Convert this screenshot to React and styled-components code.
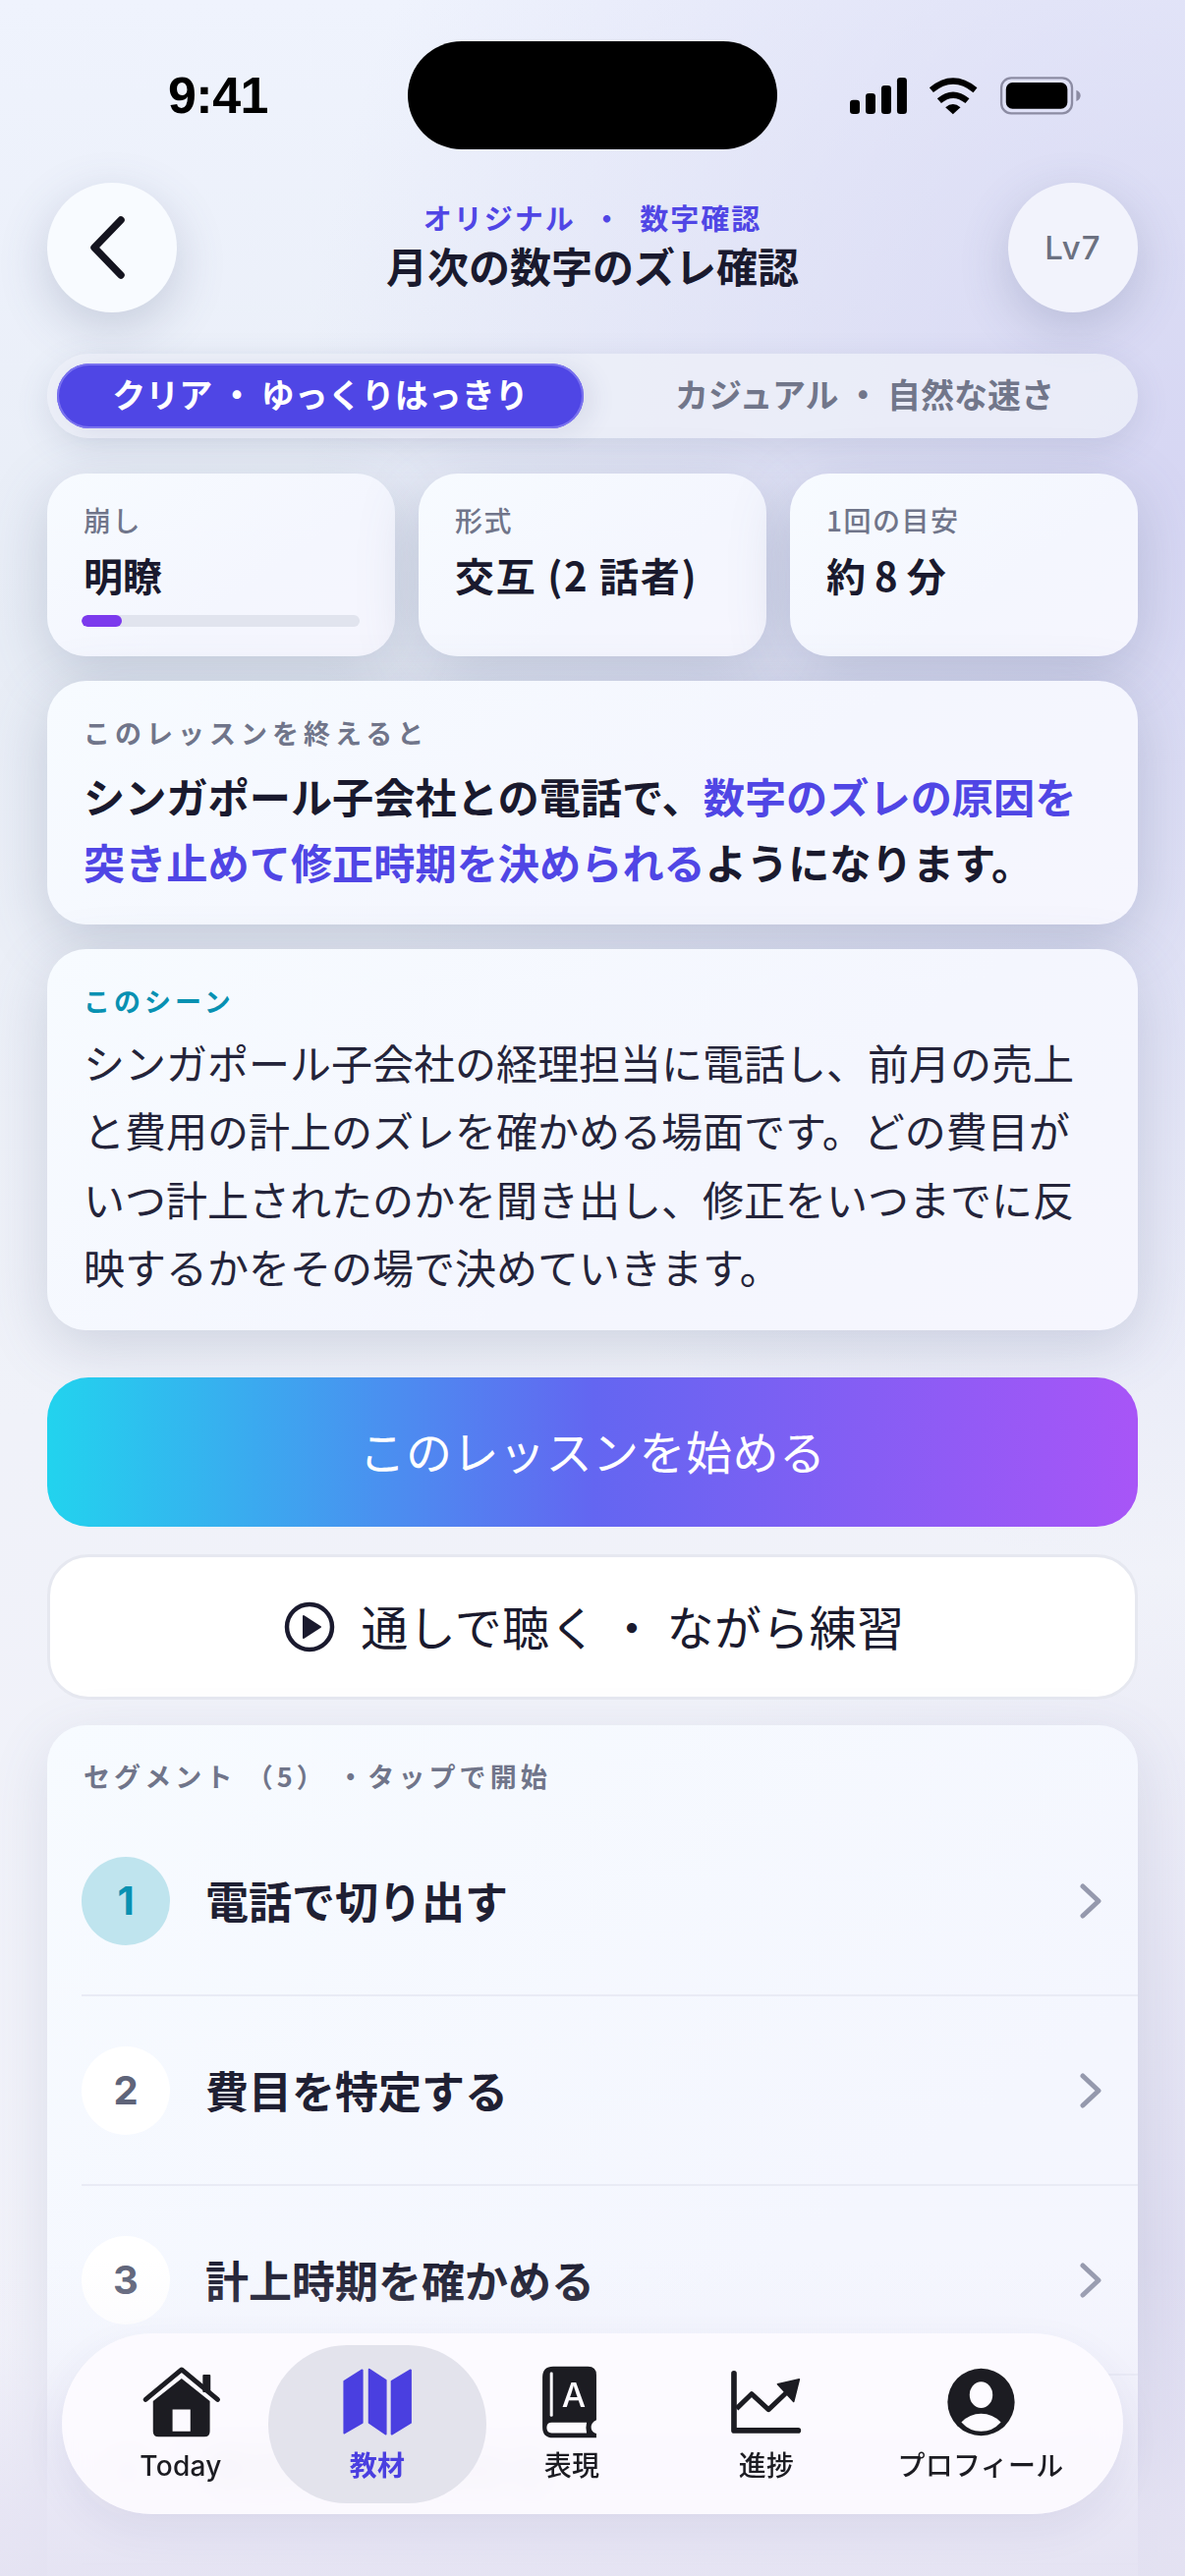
import React from 'react'
import styled, { createGlobalStyle } from 'styled-components'

const JP = `"Noto Sans CJK JP", "Noto Sans", sans-serif`
const LATIN = `Inter, "Noto Sans CJK JP", sans-serif`

const Global = createGlobalStyle`
  html, body { margin: 0; padding: 0; }
  body { font-family: ${JP}; color: #1a1a2e; }
  * { box-sizing: border-box; }
`

const Screen = styled.div`
  position: relative;
  width: 1206px;
  height: 2622px;
  overflow: hidden;
  padding: 0 48px;
  display: flex;
  flex-direction: column;
  background:
    radial-gradient(900px 1100px at 100% 500px, #d6d6f3 0%, rgba(214,214,243,0) 100%),
    radial-gradient(900px 900px at 100% 2500px, #dad8ef 0%, rgba(218,216,239,0) 100%),
    linear-gradient(180deg, #eff3fd 0%, #e8edf6 25%, #f0f2f9 55%, #f2f2fa 100%);
`

const StatusBar = styled.div`
  flex: none;
  height: 152px;
  margin: 0 -48px;
  padding-top: 42px;
  display: grid;
  grid-template-columns: 415px 376px 1fr;
  align-items: start;
`
const Clock = styled.div`
  padding-left: 29px;
  text-align: center;
  font-family: "Liberation Sans", sans-serif;
  font-weight: 700;
  font-size: 52px;
  line-height: 110px;
  letter-spacing: -0.5px;
  color: #000;
`
const Island = styled.div`
  height: 110px;
  border-radius: 55px;
  background: #000;
`
const StatusIcons = styled.svg`
  display: block;
  margin: 33px 0 0 69px;
`

const Header = styled.header`
  flex: none;
  height: 132px;
  margin-top: 34px;
  display: flex;
  align-items: center;
  justify-content: space-between;
`
const RoundButton = styled.div`
  width: 132px;
  height: 132px;
  border-radius: 50%;
  background: ${p => p.$tint || '#f8fbff'};
  box-shadow: 0 16px 50px rgba(80, 92, 130, 0.24);
  display: flex;
  align-items: center;
  justify-content: center;
  font-family: ${LATIN};
  font-weight: 500;
  font-size: 33px;
  letter-spacing: 1px;
  color: #6b7080;
`
const BackGlyph = styled.svg`
  display: block;
  margin-right: 9px;
`
const HeaderText = styled.div`
  text-align: center;
  margin-top: -6px;
`
const Kicker = styled.div`
  font-size: 29px;
  line-height: 38px;
  font-weight: 600;
  color: #5046e5;
  letter-spacing: 2px;
  white-space: pre;
`
const Title = styled.h1`
  margin: 4px 0 0;
  font-size: 42px;
  line-height: 52px;
  font-weight: 700;
  color: #1a1a2e;
`

const Segmented = styled.div`
  flex: none;
  margin-top: 42px;
  height: 86px;
  border-radius: 43px;
  padding: 10px;
  display: grid;
  grid-template-columns: 536px 1fr;
  background: rgba(236, 238, 248, 0.85);
  box-shadow: 0 10px 34px rgba(80, 92, 130, 0.14);
`
const SegmentOption = styled.div`
  border-radius: 33px;
  padding: 0 0 6px ${p => (p.$active ? 0 : 18)}px;
  display: flex;
  align-items: center;
  justify-content: center;
  font-size: 34px;
  font-weight: ${p => (p.$active ? 700 : 600)};
  white-space: pre;
  color: ${p => (p.$active ? '#fff' : '#71768a')};
  background: ${p => (p.$active ? '#4f46e5' : 'transparent')};
  box-shadow: ${p => (p.$active ? '0 0 0 2px #7a72ef inset, 10px 4px 24px rgba(70,80,125,.1)' : 'none')};
`

const StatRow = styled.div`
  flex: none;
  margin-top: 36px;
  display: grid;
  grid-template-columns: repeat(3, 354px);
  gap: 24px;
`
const Card = styled.section`
  flex: none;
  border-radius: 40px;
  background: linear-gradient(145deg, #f7fbff 0%, #f4f6fe 60%, #f6f6fe 100%);
  box-shadow: 0 16px 60px rgba(85, 100, 135, ${p => p.$shade || 0.14});
`
const StatCard = styled(Card)`
  height: 186px;
  padding: 27px 34px 0 37px;
`
const StatLabel = styled.div`
  font-size: 28px;
  line-height: 40px;
  font-weight: 500;
  letter-spacing: 1.5px;
  color: #70758a;
`
const StatValue = styled.div`
  margin-top: 10px;
  font-size: 40px;
  line-height: 52px;
  font-weight: 700;
  letter-spacing: ${p => p.$spacing || 0};
  color: #1a1a2e;
  white-space: pre;
`
const Bar = styled.div`
  margin: 15px 2px 0 -2px;
  height: 12px;
  border-radius: 6px;
  background: #e1e4ee;
  overflow: hidden;
`
const BarFill = styled.div`
  width: 41px;
  height: 100%;
  border-radius: 6px;
  background: #7c3aed;
`

const OutcomeCard = styled(Card)`
  height: 248px;
  margin-top: 25px;
  padding: 34px 37px 0;
`
const Eyebrow = styled.div`
  font-size: 27px;
  line-height: 38px;
  font-weight: 600;
  letter-spacing: ${p => p.$spacing || '5px'};
  color: ${p => p.$color || '#70758a'};
  white-space: pre;
`
const OutcomeText = styled.p`
  margin: 11px 0 0;
  font-size: 42.2px;
  line-height: 67px;
  font-weight: 700;
  color: #1a1a2e;
  white-space: nowrap;
`
const Accent = styled.span`
  color: #5046e5;
`
const SceneCard = styled(Card)`
  height: 388px;
  margin-top: 25px;
  padding: 34px 37px 0;
`
const SceneText = styled.p`
  margin: 8px 0 0;
  font-size: 42px;
  line-height: 69.3px;
  font-weight: 400;
  color: #24243a;
  white-space: nowrap;
`

const PrimaryButton = styled.div`
  flex: none;
  margin-top: 48px;
  height: 152px;
  padding-bottom: 6px;
  border-radius: 42px;
  display: flex;
  align-items: center;
  justify-content: center;
  font-size: 47px;
  font-weight: 400;
  letter-spacing: 0.5px;
  color: #fff;
  background: linear-gradient(90deg, #22d3ee 0%, #6366f1 50%, #a855f7 100%);
`
const SecondaryButton = styled.div`
  flex: none;
  margin-top: 28px;
  height: 148px;
  padding-left: 4px;
  border-radius: 42px;
  display: flex;
  align-items: center;
  justify-content: center;
  gap: 26px;
  font-size: 48px;
  color: #1a1a2e;
  background: #fff;
  border: 3px solid #e6e8f0;
`
const SecondaryLabel = styled.span`
  padding-bottom: 5px;
  letter-spacing: 0.4px;
  white-space: pre;
`

const ListCard = styled(Card)`
  margin-top: 26px;
  height: 1000px;
  padding: 33px 0 0 37px;
`
const ListHead = styled(Eyebrow)`
  margin-bottom: 12px;
`
const Row = styled.div`
  height: 193px;
  margin-left: -2px;
  padding-right: 36px;
  display: flex;
  align-items: center;
  border-bottom: 2px solid #e9ebf5;
`
const Badge = styled.div`
  flex: none;
  width: 90px;
  height: 90px;
  border-radius: 50%;
  display: flex;
  align-items: center;
  justify-content: center;
  font-family: ${LATIN};
  font-size: 40px;
  font-weight: 700;
  color: ${p => (p.$active ? '#0891b2' : '#5f6479')};
  background: ${p => (p.$active ? '#bfe4ee' : '#fff')};
`
const RowTitle = styled.div`
  flex: 1;
  margin-left: 36px;
  padding-bottom: 2px;
  font-size: 44px;
  font-weight: 600;
  color: #1f2033;
`

const BottomFade = styled.div`
  position: absolute;
  left: 0;
  right: 0;
  bottom: 0;
  height: 322px;
  pointer-events: none;
  background: linear-gradient(180deg, rgba(240,239,249,0) 0%, rgba(236,235,247,.18) 25%, rgba(229,227,243,.85) 80%, rgba(228,226,242,.92) 100%);
`
const TabBar = styled.nav`
  position: absolute;
  left: 63px;
  top: 2375px;
  width: 1080px;
  height: 184px;
  border-radius: 92px;
  padding: 12px 0 11px 32px;
  display: grid;
  grid-template-columns: 178px 222px 174px 222px 214px;
  background: rgba(253, 251, 255, 0.9);
  backdrop-filter: blur(14px);
  box-shadow: 0 16px 40px rgba(70, 70, 125, 0.08);
`
const Tab = styled.div`
  border-radius: 80px;
  display: flex;
  flex-direction: column;
  align-items: center;
  background: ${p => (p.$active ? 'rgba(226,226,235,.95)' : 'transparent')};
`
const TabIcon = styled.svg`
  display: block;
  margin-top: 20px;
  height: 76px;
`
const TabLabel = styled.div`
  margin-top: 7px;
  font-family: ${LATIN};
  font-size: 28px;
  line-height: 40px;
  letter-spacing: 0.3px;
  font-weight: ${p => (p.$active ? 600 : 500)};
  white-space: nowrap;
  color: ${p => (p.$active ? '#4a3fe0' : '#1c1c22')};
`

const Chevron = () => (
  <svg width="24" height="36" viewBox="0 0 24 36" fill="none">
    <path d="M4 3 L20 18 L4 33" stroke="#9599ad" strokeWidth="5" strokeLinecap="round" strokeLinejoin="round" />
  </svg>
)

const HomeIcon = () => (
  <TabIcon viewBox="120 80 250 230" width="83">
    <path d="M135 187 L246 95 L357 187" fill="none" stroke="#1c1c22" strokeWidth="15" strokeLinecap="round" strokeLinejoin="round" />
    <rect x="311" y="110" width="24" height="55" rx="3" fill="#1c1c22" />
    <path
      fillRule="evenodd"
      fill="#1c1c22"
      d="M158 192 L246 122 L333 192 V285 Q333 302 316 302 H175 Q158 302 158 285 Z M218 218 V285 H273 V218 Z"
    />
  </TabIcon>
)

const MapIcon = () => (
  <TabIcon viewBox="710 85 225 220" width="77">
    <g fill="#4a3fe0" stroke="#4a3fe0" strokeWidth="6" strokeLinejoin="round">
      <path d="M723 133 L776 100 V256 L723 287 Z" />
      <path d="M797 98 L846 130 V290 L797 256 Z" />
      <path d="M864 133 L920 100 V256 L864 290 Z" />
    </g>
  </TabIcon>
)

const BookIcon = () => (
  <TabIcon viewBox="1309 80 190 230" width="63">
    <path
      fill="#1c1c22"
      d="M1345 85 H1452 Q1478 85 1478 111 V250 Q1460 258 1462 275 Q1464 288 1478 292 V305 H1345 Q1312 305 1312 272 V118 Q1312 85 1345 85 Z"
    />
    <path fill="#fdfbff" d="M1340 258 H1448 Q1444 275 1448 290 H1340 Q1325 290 1325 274 Q1325 258 1340 258 Z" />
    <rect x="1335" y="103" width="9" height="137" rx="4" fill="#fdfbff" />
    <text x="1408" y="211" textAnchor="middle" fontFamily="Inter, sans-serif" fontSize="104" fontWeight="500" fill="#fdfbff">A</text>
  </TabIcon>
)

const ChartIcon = () => (
  <TabIcon viewBox="290 90 235 210" width="78">
    <path d="M308 107 V282 H505" fill="none" stroke="#1c1c22" strokeWidth="17" strokeLinecap="round" strokeLinejoin="round" />
    <path d="M316 215 L362 170 L414 218 L470 165" fill="none" stroke="#1c1c22" strokeWidth="15" strokeLinejoin="round" />
    <path d="M442 140 L508 125 L491 193 Z" fill="#1c1c22" stroke="#1c1c22" strokeWidth="5" strokeLinejoin="round" />
  </TabIcon>
)

const ProfileIcon = () => (
  <TabIcon viewBox="930 85 230 220" width="77">
    <circle cx="1045" cy="195" r="102" fill="#1c1c22" />
    <ellipse cx="1045" cy="173" rx="35" ry="40" fill="#fdfbff" />
    <path d="M985 256 Q1010 230 1045 230 Q1080 230 1105 256 Q1080 284 1045 284 Q1010 284 985 256 Z" fill="#fdfbff" />
  </TabIcon>
)

const rows = [
  { n: 1, title: '電話で切り出す', active: true },
  { n: 2, title: '費目を特定する' },
  { n: 3, title: '計上時期を確かめる' },
  { n: 4, title: '修正時期を決める' },
]

const tabs = [
  { label: 'Today', icon: <HomeIcon /> },
  { label: '教材', icon: <MapIcon />, active: true },
  { label: '表現', icon: <BookIcon /> },
  { label: '進捗', icon: <ChartIcon /> },
  { label: 'プロフィール', icon: <ProfileIcon /> },
]

export default function App() {
  return (
    <Screen>
      <Global />
      <StatusBar>
        <Clock>9:41</Clock>
        <Island />
        <StatusIcons width="243" height="45" viewBox="60 105 730 135">
          <rect x="75" y="185" width="30" height="43" rx="10" />
          <rect x="123" y="165" width="30" height="63" rx="10" />
          <rect x="171" y="141" width="30" height="87" rx="10" />
          <rect x="219" y="117" width="30" height="111" rx="10" />
          <path d="M324 155 Q390 100 458 155" fill="none" stroke="#000" strokeWidth="19" />
          <path d="M348 188 Q390 152 434 188" fill="none" stroke="#000" strokeWidth="19" />
          <path d="M367 208 Q390 188 413 208 L390 229 Z" />
          <rect x="538" y="118" width="216" height="108" rx="30" fill="none" stroke="#8c8ca3" strokeWidth="7" />
          <rect x="552" y="132" width="188" height="80" rx="20" />
          <path d="M767 155 Q780 160 780 172 Q780 184 767 189 Z" fill="#8c8ca3" />
        </StatusIcons>
      </StatusBar>

      <Header>
        <RoundButton>
          <BackGlyph width="44" height="68" viewBox="0 0 44 68" fill="none">
            <path d="M35 6 L8 34 L35 62" stroke="#14141f" strokeWidth="7.5" strokeLinecap="round" strokeLinejoin="round" />
          </BackGlyph>
        </RoundButton>
        <HeaderText>
          <Kicker>オリジナル  ・  数字確認</Kicker>
          <Title>月次の数字のズレ確認</Title>
        </HeaderText>
        <RoundButton $tint="#f2f3fc">Lv7</RoundButton>
      </Header>

      <Segmented>
        <SegmentOption $active>クリア ・ ゆっくりはっきり</SegmentOption>
        <SegmentOption>カジュアル ・ 自然な速さ</SegmentOption>
      </Segmented>

      <StatRow>
        <StatCard $shade={0.26}>
          <StatLabel>崩し</StatLabel>
          <StatValue>明瞭</StatValue>
          <Bar><BarFill /></Bar>
        </StatCard>
        <StatCard $shade={0.26}>
          <StatLabel>形式</StatLabel>
          <StatValue $spacing="1.7px">交互 (2 話者)</StatValue>
        </StatCard>
        <StatCard $shade={0.26}>
          <StatLabel>1回の目安</StatLabel>
          <StatValue>約 8 分</StatValue>
        </StatCard>
      </StatRow>

      <OutcomeCard $shade={0.26}>
        <Eyebrow>このレッスンを終えると</Eyebrow>
        <OutcomeText>
          シンガポール子会社との電話で、<Accent>数字のズレの原因を</Accent>
          <br />
          <Accent>突き止めて修正時期を決められる</Accent>ようになります。
        </OutcomeText>
      </OutcomeCard>

      <SceneCard $shade={0.22}>
        <Eyebrow $color="#0891b2" $spacing="4px">このシーン</Eyebrow>
        <SceneText>
          シンガポール子会社の経理担当に電話し、前月の売上
          <br />
          と費用の計上のズレを確かめる場面です。どの費目が
          <br />
          いつ計上されたのかを聞き出し、修正をいつまでに反
          <br />
          映するかをその場で決めていきます。
        </SceneText>
      </SceneCard>

      <PrimaryButton>このレッスンを始める</PrimaryButton>
      <SecondaryButton>
        <svg width="52" height="52" viewBox="0 0 52 52" fill="none">
          <circle cx="26" cy="26" r="23" stroke="#1a1a2e" strokeWidth="4.5" />
          <path d="M20 15 L37 26 L20 37 Z" fill="#1a1a2e" stroke="#1a1a2e" strokeWidth="2" strokeLinejoin="round" />
        </svg>
        <SecondaryLabel>通しで聴く ・ ながら練習</SecondaryLabel>
      </SecondaryButton>

      <ListCard>
        <ListHead $spacing="4.1px">セグメント （5） ・タップで開始</ListHead>
        {rows.map(r => (
          <Row key={r.n}>
            <Badge $active={r.active}>{r.n}</Badge>
            <RowTitle>{r.title}</RowTitle>
            <Chevron />
          </Row>
        ))}
      </ListCard>

      <BottomFade />

      <TabBar>
        {tabs.map(t => (
          <Tab key={t.label} $active={t.active}>
            {t.icon}
            <TabLabel $active={t.active}>{t.label}</TabLabel>
          </Tab>
        ))}
      </TabBar>
    </Screen>
  )
}
